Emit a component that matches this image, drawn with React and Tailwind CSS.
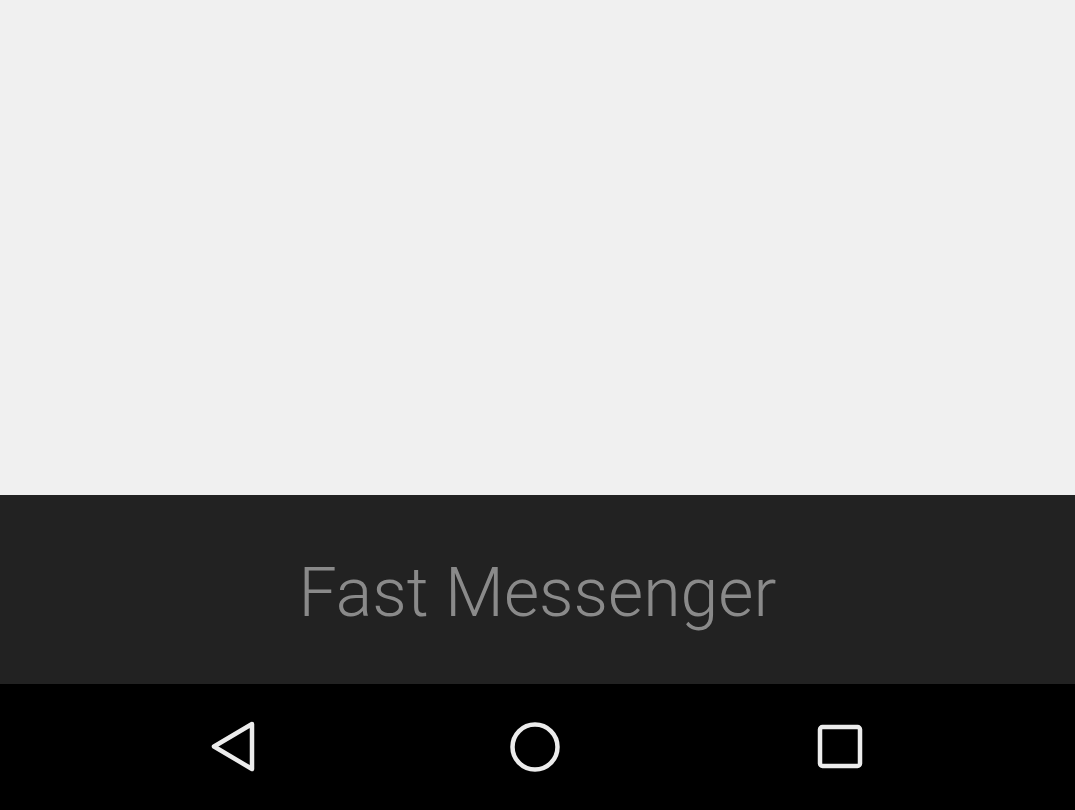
import React from "react";

/* Android nav bar glyphs */
const BackIcon = () => (
  <svg width="48" height="52" viewBox="0 0 48 52" fill="none">
    <path
      d="M42 3 L4 25.5 L42 48 Z"
      stroke="#ececec"
      strokeWidth="4.5"
      strokeLinejoin="round"
    />
  </svg>
);

const HomeIcon = () => (
  <svg width="52" height="52" viewBox="0 0 52 52" fill="none">
    <circle cx="26" cy="26" r="22.5" stroke="#ececec" strokeWidth="4.5" />
  </svg>
);

const RecentsIcon = () => (
  <svg width="46" height="46" viewBox="0 0 46 46" fill="none">
    <rect x="3" y="3" width="40" height="39" rx="2.5" stroke="#ececec" strokeWidth="4.5" />
  </svg>
);

export default function App() {
  return (
    <div className="w-[1075px] h-[810px] flex flex-col font-['Roboto',sans-serif]">
      <div className="h-[495px] bg-[#f0f0f0]" />
      <div className="h-[189px] bg-[#222222] flex items-center justify-center">
        <h1 className="text-[68px] font-light text-[#8a8a8a] leading-none pt-[7px]">
          Fast Messenger
        </h1>
      </div>
      <nav className="flex-1 bg-black flex items-center">
        <div className="w-[1075px] flex items-center">
          <div className="w-[210px]" />
          <div className="w-[48px] flex justify-start">
            <BackIcon />
          </div>
          <div className="w-[251px]" />
          <HomeIcon />
          <div className="w-[256px]" />
          <RecentsIcon />
        </div>
      </nav>
    </div>
  );
}
